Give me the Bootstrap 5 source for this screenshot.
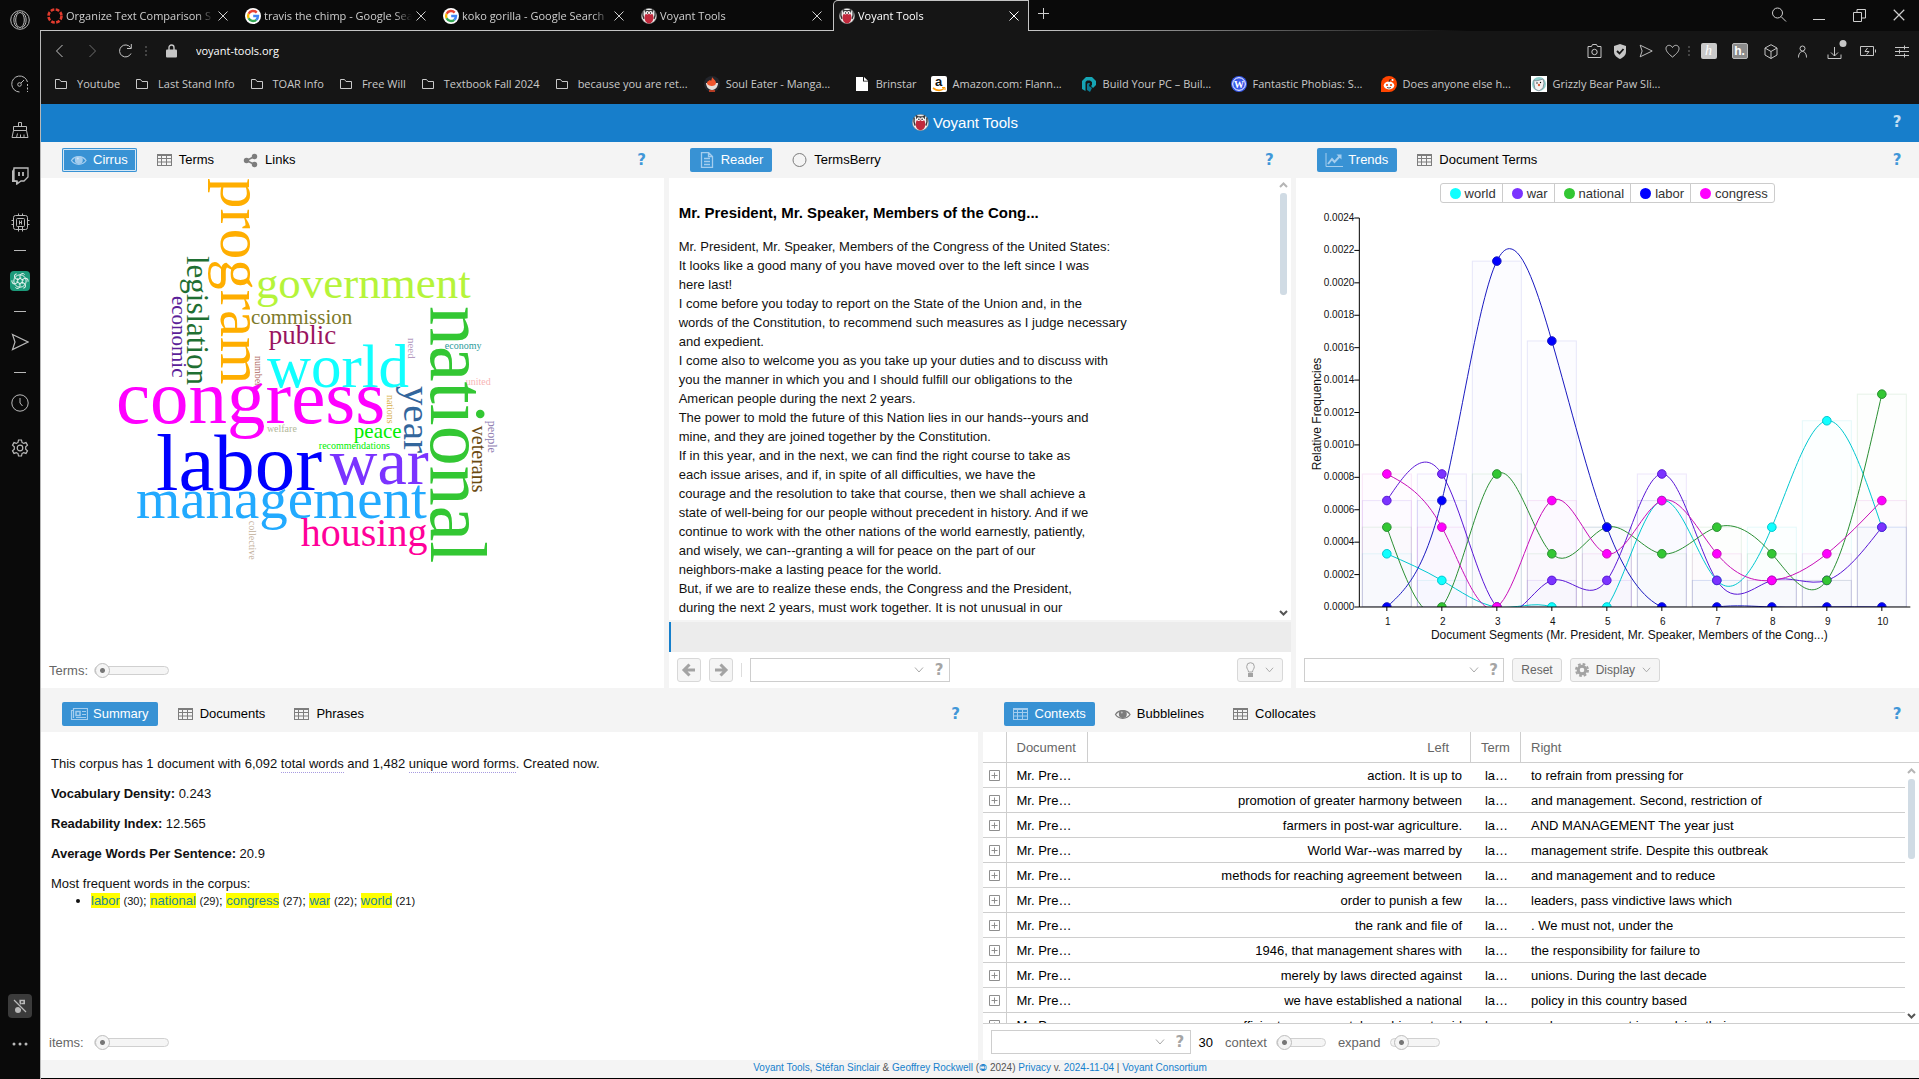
<!DOCTYPE html>
<html lang="en">
<head>
<meta charset="utf-8">
<meta name="viewport" content="width=device-width, initial-scale=1">
<title>Voyant Tools</title>
<link href="https://cdn.jsdelivr.net/npm/bootstrap@5.3.0/dist/css/bootstrap.min.css" rel="stylesheet">
<style>
  :root { --blue:#157fcc; --tab:#3892d4; --grey:#f4f4f4; --line:#cecece; --chrome:#151515; --dark:#0a0a0a; --edge:#b8b8b8; }
  body { font-family:"Liberation Sans",Arial,sans-serif; font-size:13px; line-height:19px; color:#000; background:var(--dark); overflow:hidden; }
  button, input { font-family:inherit; }
  svg { display:block; flex:none; }
  .ico { fill:none; stroke:currentColor; stroke-width:1; }
  .plain { background:none; border:0; padding:0; color:inherit; display:flex; align-items:center; justify-content:center; }

  /* browser side bar */
  .side { width:40px; flex:none; color:#b9b9b9; }
  .side .plain { height:46px; }
  .side .s40 { height:40px; } .side .s50 { height:50px; } .side .s38 { height:38px; }
  .side .first { margin-bottom:21px; }
  .side .dash { height:11px; display:flex; align-items:center; justify-content:center; }
  .side .dash::before { content:""; width:12px; height:1px; background:#b9b9b9; }
  .mute { width:24px; height:24px; border-radius:4px; background:#3b3b3b; display:flex; align-items:center; justify-content:center; }

  /* browser tabs and tool bars */
  .chrome-font { font-family:"Open Sans","Noto Sans",sans-serif; font-size:11px; line-height:16px; }
  .tabrow { height:31px; color:#cfcfcf; padding-left:1px; background:linear-gradient(90deg,#c4c4c4 0 53%,transparent 76%) bottom/100% 1px no-repeat; }
  .btab { width:198px; padding:0 10px 0 6px; gap:3px; color:inherit; text-decoration:none; }
  .btab.on { width:196px; padding:0 8px 0 5px; background:var(--chrome); border:1px solid #c4c4c4; border-bottom:0; border-radius:5px 0 0 0; color:#fff; }
  .btab .lbl { overflow:hidden; white-space:nowrap; -webkit-mask-image:linear-gradient(90deg,#000 88%,transparent); }
  .wbtn { width:40px; height:30px; }
  .framed { border-left:1px solid var(--edge); }
  .urlrow { height:41px; background:var(--chrome); color:#c6c6c6; padding:0 1px 1px 2px; }
  .urlrow .plain { height:32px; }
  .w33 { width:33px; } .w31 { width:31px; } .w26 { width:26px; }
  .dots { width:8px; color:#444; display:flex; justify-content:center; }
  .url { background:none; border:0; color:#fff; padding:0; outline:0; margin-left:19px; }
  .sq { width:16px; height:16px; border-radius:2px; background:#c9c9c9; color:#fff; font:italic 14px/16px "Liberation Serif",serif; text-align:center; }
  .sq.hyp { background:#8b8b8b; font:bold 12px/15px "Liberation Sans",sans-serif; border:1px solid #b9b9b9; }
  .marks { height:32px; padding:0 0 8px 12px; background:var(--chrome); color:#c9c9c9; }
  .marks a { color:inherit; text-decoration:none; display:flex; align-items:center; gap:6px; white-space:nowrap; padding-right:14px; }
  .marks .fold svg { margin-right:2px; }
  .marks .wide { width:150px; padding-right:0; }

  /* application */
  .brand { height:38px; background:#177ecb; color:#fff; font-size:15px; padding:0 14px 2px 0; }
  .help { color:#4197d8; font:bold 15px/19px "DejaVu Sans",sans-serif; width:16px; }
  .brand .help { color:#c4dff3; }
  .app { background:var(--grey); }
  .r-top { flex:546 1 0; } .r-bot { flex:372 1 0; }
  .cols { gap:5px; }
  .pane { flex:1 1 0; min-width:0; }
  .tabs { padding:6px 14px 6px 21px; gap:11px; }
  .r-bot .tabs { padding-top:14px; }
  .tb { height:24px; border:0; background:none; border-radius:2px; padding:0 9px 1px 8px; display:flex; align-items:center; gap:5px; color:#000; white-space:nowrap; }
  .tb svg { color:#7d7d7d; }
  .tb.active { background:var(--tab); color:#fff; }
  .tb.active svg { color:#a4cdee; }
  .tb.foc { box-shadow:inset 0 0 0 1px var(--tab), inset 0 0 0 2px #d3e7f6; }
  .tools { height:36px; padding:0 8px; gap:8px; color:#666; flex:none; }
  .tools label { color:#666; }
  .lab { width:37px; white-space:nowrap; }
  .combo { width:200px; height:24px; border:1px solid var(--line); background:#fff; color:#aaa; padding-right:3px; }
  .combo input { border:0; outline:0; width:100%; min-width:0; background:none; height:22px; }
  .combo .help { color:#a5a5a5; margin-left:8px; }
  .tbtn { height:24px; border:1px solid #d8d8d8; border-radius:3px; background:#f5f5f5; color:#666; font-size:12px; padding:0 8px; display:flex; align-items:center; justify-content:center; gap:7px; }
  .tbtn.disp { padding:0 8px 0 4px; }
  .tbtn.bulb { gap:10px; }
  .tbtn svg { color:#a3a3a3; }
  .sq24 { width:24px; padding:0; }
  .tsep { width:1px; height:14px; background:#ddd; }
  .rng { -webkit-appearance:none; appearance:none; height:15px; width:75px; background:none; margin:0; }
  .rng.short { width:50px; margin-left:1px; }
  .rng::-webkit-slider-runnable-track { height:9px; border:1px solid #d0d0d0; border-radius:5px; background:#f5f5f5; }
  .rng::-webkit-slider-thumb { -webkit-appearance:none; width:15px; height:15px; margin-top:-4px; border:1px solid #bdbdbd; border-radius:50%; background:radial-gradient(circle,#777 0 2px,#f5f5f5 3px); }

  .cloud text { font-family:"Liberation Serif",serif; }
  .chart text { font-family:"Liberation Sans",Arial,sans-serif; fill:#111; }

  .scroller { flex-basis:0; }
  .reader { padding:25px 10px 0; color:#111; position:relative; }
  .reader h2 { font-size:15px; line-height:20px; font-weight:bold; margin:0 0 14px; color:#000; }
  .reader p { margin:0; }
  .sbar { position:absolute; right:3px; top:3px; bottom:3px; width:9px; color:#b5b5b5; display:flex; flex-direction:column; align-items:center; }
  .sbar i { width:7px; border-radius:3px; background:#d0dbe4; margin:4px 0 auto; height:102px; }
  .sbar svg:last-child { color:#555; }
  .strip { height:32px; background:#ececec; border-top:2px solid var(--grey); flex:none; }
  .strip::before { content:""; display:block; width:2px; height:30px; background:var(--blue); }

  .legend { padding-top:5px; }
  .lg { height:20px; border:1px solid #ccc; margin-left:-1px; background:#fff; padding:0 6px 0 9px; display:flex; align-items:center; gap:4px; color:#333; }
  .lg:first-child { border-radius:3px 0 0 3px; } .lg:last-child { border-radius:0 3px 3px 0; }
  .lg i { width:11px; height:11px; border-radius:50%; }

  .sum { padding:22px 10px 0; color:#111; }
  .sum p { margin:0 0 11px; }
  .sum .defn { border-bottom:1px dotted #a79be0; display:inline-block; line-height:16px; }
  .sum ul { margin:-13px 0 0; padding-left:40px; }
  .sum .cnt { font-size:11px; }
  .sum a { background:#ff0; color:#23869c; text-decoration:none; }

  .gridbox { border-bottom:1px solid var(--line); position:relative; }
  .kwic { width:100%; table-layout:fixed; border-collapse:separate; border-spacing:0; }
  .kwic th { height:31px; border-bottom:1px solid var(--line); font-weight:normal; color:#666; padding:0 10px; border-right:1px solid var(--line); vertical-align:middle; }
  .kwic th.nb { border-right:0; }
  .kwic th.lefth { padding-right:21px; }
  .kwic td { height:25px; border-bottom:1px solid var(--line); padding:0 9px 0 10px; white-space:nowrap; overflow:hidden; }
  .kwic td:first-child { border-right:1px solid var(--line); padding:0; }
  .kwic td:first-child svg { margin:0 auto; }
  .kwic td:last-child { border-bottom:0; }
  .gridbox .sbar { top:35px; }
  .gridbox .sbar i { height:80px; }
  .foot { height:18px; font-size:10px; line-height:16px; color:#555; background:var(--grey); flex:none; border-bottom:1px solid #000; box-sizing:content-box; }
  .foot a { color:#157fcc; text-decoration:none; }
</style>
</head>
<body class="vh-100 d-flex">

<svg width="0" height="0" class="position-absolute" aria-hidden="true">
  <symbol id="owl" viewBox="0 0 16 16"><ellipse cx="8" cy="8" rx="7.600" ry="7.600" fill="#f2f2f2" stroke="#8a8a8a" stroke-width=".6"/><path d="M2 3.500Q1.300 8 3 11M14 3.500Q14.700 8 13 11" stroke="#333" stroke-width="1.300" fill="none"/><path d="M3.500.800l2.500 1.200h4l2.500-1.200l-.5 4H4z" fill="#3a3a3a"/><ellipse cx="8" cy="9.600" rx="4.500" ry="5.800" fill="#c0293c"/><circle cx="6.300" cy="4.800" r="1.800" fill="#fff"/><circle cx="9.700" cy="4.800" r="1.800" fill="#fff"/><circle cx="6.500" cy="5" r=".7"/><circle cx="9.500" cy="5" r=".7"/></symbol>
  <symbol id="goog" viewBox="0 0 16 16"><circle cx="8" cy="8" r="8" fill="#fff"/><g fill="none" stroke-width="2.400"><path d="M11.700 4.600A5 5 0 0 0 3.600 5.700" stroke="#ea4335"/><path d="M3.600 5.700a5 5 0 0 0 0 4.600" stroke="#fbbc05"/><path d="M3.600 10.300a5 5 0 0 0 7.700 1.500" stroke="#34a853"/><path d="M11.300 11.800A5 5 0 0 0 13 8H8.200" stroke="#4285f4"/></g></symbol>
  <symbol id="xx" viewBox="0 0 12 12"><path d="M1.500 1.500l9 9M10.500 1.500l-9 9" stroke="currentColor"/></symbol>
  <symbol id="folder" viewBox="0 0 16 14"><path d="M2.500 2.500h4l1.500 2h5.500v7h-11z" fill="none" stroke="currentColor"/></symbol>
  <symbol id="table" viewBox="0 0 18 16"><g fill="none" stroke="currentColor"><rect x="1.500" y="2.500" width="14" height="11"/><path d="M1 3.500h15M1 6.500h15M1 10h15M5.500 3v11M10.500 3v11"/></g></symbol>
  <symbol id="eye" viewBox="0 0 18 16"><path d="M1.500 8.500C4.500 3.500 13 3.500 16 8.500C13 13.500 4.500 13.500 1.500 8.500z" fill="none" stroke="currentColor" stroke-width="1.300"/><circle cx="8.800" cy="8" r="4" fill="currentColor"/><circle cx="7.800" cy="6.600" r="1" fill="#fff" opacity=".5"/></symbol>
  <symbol id="share" viewBox="0 0 18 16"><g fill="currentColor"><circle cx="4.500" cy="8.500" r="2.700"/><circle cx="12.500" cy="4.500" r="2.700"/><circle cx="12.500" cy="12.500" r="2.700"/></g><path d="M12.500 4.500l-8 4l8 4" stroke="currentColor" stroke-width="1.600" fill="none"/></symbol>
  <symbol id="down" viewBox="0 0 10 8"><path d="M1 1.500l4 4.500l4-4.500" fill="none" stroke="currentColor"/></symbol>
  <symbol id="arr" viewBox="0 0 16 16"><path d="M8.500 2.500L3 8l5.500 5.500M3 8h11" fill="none" stroke="currentColor" stroke-width="3"/></symbol>
  <symbol id="send" viewBox="0 0 18 18"><path d="M1.500 1.500L17 9L1.500 16.500L4 9z" fill="none" stroke="currentColor" stroke-width="1.200"/></symbol>
  <symbol id="gear" viewBox="0 0 18 18"><path d="M7.500 1h3l.5 2.400 1.700 1 2.300-.8 1.500 2.600-1.800 1.600v2.400l1.800 1.600-1.500 2.600-2.300-.8-1.700 1-.5 2.400h-3L7 14.600l-1.700-1-2.300.8-1.500-2.600 1.800-1.600V7.800L1.500 6.200 3 3.600l2.300.8 1.700-1z" fill="none" stroke="currentColor" stroke-width="1.200"/><circle cx="9" cy="9" r="2.800" fill="none" stroke="currentColor" stroke-width="1.200"/></symbol>
  <symbol id="plus" viewBox="0 0 11 11"><path d="M.5.500h10v10H.5zM2.500 5.500h6M5.500 2.500v6" fill="none" stroke="#8e8e8e"/></symbol>
  <symbol id="caretU" viewBox="0 0 9 6"><path d="M1 5l3.500-3.500L8 5" fill="none" stroke="currentColor" stroke-width="2"/></symbol>
  <symbol id="caretD" viewBox="0 0 9 6"><path d="M1 1l3.500 3.500L8 1" fill="none" stroke="currentColor" stroke-width="2"/></symbol>
</svg>

<aside class="side d-flex flex-column">
  <button class="plain s40 first" aria-label="Opera"><svg class="ico" width="20" height="20" viewBox="0 0 20 20"><circle cx="10" cy="10" r="9.300"/><ellipse cx="10" cy="10" rx="4.300" ry="7.500"/><path d="M8 2.500C2.500 4 2.500 16 8 17.500M12 2.500c5.500 1.500 5.500 13.500 0 15"/></svg></button>
  <button class="plain" aria-label="Speed dial"><svg class="ico" width="18" height="18" viewBox="0 0 18 18" stroke-width="1.200"><path d="M8.500 17A8 8 0 1 1 16.500 7"/><path d="M16.500 9v8" stroke-dasharray="2 1.500"/><circle cx="8.500" cy="9.500" r="1.800"/><path d="M10 8l3-3"/></svg></button>
  <button class="plain" aria-label="Cleaner"><svg class="ico" width="18" height="18" viewBox="0 0 18 18"><path d="M7.500 5.500v-4h3v4M2.500 9.500v-4h13v4zM2.500 9.500L1 16.500h16l-1.500-7M5.500 16.500l1-4M9.500 16.500v-3M13 16.500v-3"/></svg></button>
  <button class="plain" aria-label="Twitch"><svg width="18" height="18" viewBox="0 0 18 18"><path d="M3 1h14v9l-4 4h-3l-4 3v-3H3z" fill="none" stroke="currentColor" stroke-width="1.300"/><path d="M3 1L1 4v11h4v3l3-3-5-2z" fill="currentColor"/><path d="M8 5v4M12 5v4" stroke="currentColor" stroke-width="1.800"/></svg></button>
  <button class="plain" aria-label="Chip"><svg class="ico" width="19" height="19" viewBox="0 0 19 19"><rect x="2.500" y="2.500" width="14" height="14" rx="2"/><rect x="5.500" y="5.500" width="8" height="8" rx="1"/><path d="M7.500 2.500v-2M11.500 2.500v-2M7.500 18.500v-5M11.500 18.500v-5M.5 7.500h2M.5 11.500h2M16.500 7.500h2M16.500 11.500h2"/><path d="M8.500 7.500v4M10.500 7.500v4M8 9.500h3"/></svg></button>
  <div class="dash"></div>
  <button class="plain s50" aria-label="ChatGPT"><svg width="20" height="20" viewBox="0 0 20 20"><rect width="20" height="20" rx="4" fill="#1c9a7a"/><g fill="none" stroke="#e8f5f1" stroke-width="1"><path id="kn" d="M10 7.400V4.800a2.600 2.600 0 0 1 4.600-1.300M10 7.400l3.500 2"/><use href="#kn" transform="rotate(60 10 10)"/><use href="#kn" transform="rotate(120 10 10)"/><use href="#kn" transform="rotate(180 10 10)"/><use href="#kn" transform="rotate(240 10 10)"/><use href="#kn" transform="rotate(300 10 10)"/><circle cx="10" cy="10" r="6.200"/></g></svg></button>
  <div class="dash"></div>
  <button class="plain s50" aria-label="My flow"><svg width="18" height="18"><use href="#send"/></svg></button>
  <div class="dash"></div>
  <button class="plain s50" aria-label="History"><svg class="ico" width="18" height="18" viewBox="0 0 18 18" stroke-width="1.200"><circle cx="9" cy="9" r="8.200"/><path d="M9 4v5l2.500 3"/></svg></button>
  <button class="plain s40" aria-label="Settings"><svg width="18" height="18"><use href="#gear"/></svg></button>
  <button class="plain s38 mt-auto" aria-label="Player muted"><span class="mute"><svg width="14" height="14" viewBox="0 0 14 14"><circle cx="5" cy="11" r="3" fill="currentColor"/><path d="M7.200 11V1.500h4v3h-3" stroke="currentColor" stroke-width="1.600" fill="none"/><path d="M1 1l12 12" stroke="#3b3b3b" stroke-width="3"/><path d="M1 1l12 12" stroke="currentColor" stroke-width="1.200"/></svg></span></button>
  <button class="plain s38 mb-3" aria-label="More"><svg width="16" height="4" viewBox="0 0 16 4" fill="currentColor"><circle cx="2" cy="2" r="1.500"/><circle cx="8" cy="2" r="1.500"/><circle cx="14" cy="2" r="1.500"/></svg></button>
</aside>

<main class="flex-grow-1 d-flex flex-column overflow-hidden">
  <nav class="tabrow d-flex chrome-font flex-shrink-0">
    <a href="#" class="btab d-flex align-items-center"><svg width="16" height="16" viewBox="0 0 16 16"><circle cx="8" cy="8" r="6.500" fill="none" stroke="#e23b2e" stroke-width="2.600" stroke-dasharray="3.600 1.500"/></svg><span class="lbl flex-grow-1">Organize Text Comparison S</span><svg width="12" height="12"><use href="#xx"/></svg></a>
    <a href="#" class="btab d-flex align-items-center"><svg width="16" height="16"><use href="#goog"/></svg><span class="lbl flex-grow-1">travis the chimp - Google Search</span><svg width="12" height="12"><use href="#xx"/></svg></a>
    <a href="#" class="btab d-flex align-items-center"><svg width="16" height="16"><use href="#goog"/></svg><span class="lbl flex-grow-1">koko gorilla - Google Search</span><svg width="12" height="12"><use href="#xx"/></svg></a>
    <a href="#" class="btab d-flex align-items-center"><svg width="16" height="16"><use href="#owl"/></svg><span class="lbl flex-grow-1">Voyant Tools</span><svg width="12" height="12"><use href="#xx"/></svg></a>
    <a href="#" class="btab on d-flex align-items-center"><svg width="16" height="16"><use href="#owl"/></svg><span class="lbl flex-grow-1">Voyant Tools</span><svg width="12" height="12"><use href="#xx"/></svg></a>
    <button class="plain ms-2 mb-1" aria-label="New tab"><svg class="ico" width="13" height="13" viewBox="0 0 13 13"><path d="M6.500 1v11M1 6.500h11"/></svg></button>
    <div class="ms-auto d-flex">
      <button class="plain wbtn" aria-label="Search"><svg class="ico" width="16" height="16" viewBox="0 0 16 16" stroke-width="1.200"><circle cx="6.500" cy="6" r="5"/><path d="M10 9.500l5 5"/></svg></button>
      <button class="plain wbtn" aria-label="Minimize"><svg class="ico" width="12" height="12" viewBox="0 0 12 12"><path d="M0 10.500h12"/></svg></button>
      <button class="plain wbtn" aria-label="Restore"><svg class="ico" width="13" height="13" viewBox="0 0 13 13"><path d="M.5 3.500h8v9h-8zM4 3.500v-3h8.500v8.500H9"/></svg></button>
      <button class="plain wbtn" aria-label="Close"><svg width="14" height="14"><use href="#xx"/></svg></button>
    </div>
  </nav>

  <div class="framed flex-grow-1 d-flex flex-column overflow-hidden">
    <div class="urlrow chrome-font d-flex align-items-center flex-shrink-0">
      <button class="plain w33" aria-label="Back"><svg class="ico" width="9" height="14" viewBox="0 0 9 14" stroke-width="1.400"><path d="M7.500 1L1.500 7l6 6"/></svg></button>
      <button class="plain w33 opacity-50" aria-label="Forward"><svg class="ico" width="9" height="14" viewBox="0 0 9 14"><path d="M1.500 1l6 6l-6 6"/></svg></button>
      <button class="plain w33" aria-label="Reload"><svg class="ico" width="15" height="14" viewBox="0 0 15 14" stroke-width="1.400"><path d="M12.500 3.500A6 6 0 1 0 13 9.500M13.300 0v4.500H9"/></svg></button>
      <span class="dots"><svg width="2" height="12" fill="currentColor"><path d="M0 1h2v2H0zM0 5h2v2H0zM0 9h2v2H0z"/></svg></span>
      <span class="ps-3"><svg width="11" height="14" viewBox="0 0 11 14"><rect y="5.500" width="11" height="8" rx="1" fill="currentColor"/><path d="M3 6V3.500a2.500 2.500 0 0 1 5 0V6" fill="none" stroke="currentColor" stroke-width="1.400"/></svg></span>
      <input class="url flex-grow-1" type="text" value="voyant-tools.org" aria-label="Address">
      <button class="plain w26" aria-label="Snapshot"><svg class="ico" width="15" height="14" viewBox="0 0 15 14"><path d="M1 2.500h3.500l1-2h4l1 2H14v11H1z"/><circle cx="7.500" cy="8" r="2.700"/></svg></button>
      <button class="plain w26" aria-label="Ad blocker"><svg width="14" height="15" viewBox="0 0 14 15"><path d="M7 0l6 2v5.500c0 4-3 6-6 7.500-3-1.500-6-3.500-6-7.500V2z" fill="currentColor"/><path d="M4 7l2.500 2.500L10.500 5" stroke="#151515" stroke-width="1.800" fill="none"/></svg></button>
      <button class="plain w26" aria-label="Send to flow"><svg width="14" height="14"><use href="#send"/></svg></button>
      <button class="plain w26" aria-label="Bookmark"><svg class="ico" width="15" height="14" viewBox="0 0 15 14" stroke-width="1.200"><path d="M7.500 13C3 9.500 1 7 1 4.500 1 1 5.500 0 7.500 3.500 9.500 0 14 1 14 4.500c0 2.500-2 5-6.500 8.500z"/></svg></button>
      <span class="dots"><svg width="2" height="12" fill="currentColor"><path d="M0 1h2v2H0zM0 5h2v2H0zM0 9h2v2H0z"/></svg></span>
      <button class="plain w31" aria-label="Honey"><span class="sq">h</span></button>
      <button class="plain w31" aria-label="Hypothesis"><span class="sq hyp">h.</span></button>
      <button class="plain w31" aria-label="Extensions"><svg class="ico" width="14" height="15" viewBox="0 0 14 15"><path d="M7 .7l6 3.300v7l-6 3.500-6-3.500V4zM1 4l6 3.500L13 4M7 7.500v7"/></svg></button>
      <button class="plain w33" aria-label="Account"><svg class="ico" width="11" height="13" viewBox="0 0 11 13"><circle cx="5.500" cy="3.500" r="2.500"/><path d="M1.500 12.500c0-8 8-8 8 0"/></svg></button>
      <button class="plain w33 position-relative" aria-label="Downloads"><svg class="ico" width="22" height="22" viewBox="0 0 22 22"><path d="M9.500 7v9M6 12.500l3.500 3.500l3.500-3.500M3 14.500v4h13v-4"/><circle cx="18" cy="3.500" r="3.500" fill="currentColor" stroke="none"/></svg></button>
      <button class="plain w33" aria-label="Battery saver"><svg class="ico" width="17" height="10" viewBox="0 0 17 10"><path d="M.5.500h13v9H.5zM15.500 3.500v3M7.500 2L5 5.500h4L6.500 8.500"/></svg></button>
      <button class="plain w33" aria-label="Easy setup"><svg class="ico" width="14" height="13" viewBox="0 0 14 13"><path d="M0 2.500h14M0 6.500h14M0 10.500h14M9.500 .5v4M4.500 4.500v4M9.500 8.500v4"/></svg></button>
    </div>
    <nav class="marks chrome-font d-flex align-items-center flex-shrink-0">
      <a href="#" class="fold"><svg width="16" height="14"><use href="#folder"/></svg>Youtube</a>
      <a href="#" class="fold"><svg width="16" height="14"><use href="#folder"/></svg>Last Stand Info</a>
      <a href="#" class="fold"><svg width="16" height="14"><use href="#folder"/></svg>TOAR Info</a>
      <a href="#" class="fold"><svg width="16" height="14"><use href="#folder"/></svg>Free Will</a>
      <a href="#" class="fold"><svg width="16" height="14"><use href="#folder"/></svg>Textbook Fall 2024</a>
      <a href="#" class="fold wide"><svg width="16" height="14"><use href="#folder"/></svg>because you are ret...</a>
      <a href="#" class="wide"><svg width="16" height="16" viewBox="0 0 16 16"><circle cx="8" cy="8" r="8" fill="#23252b"/><path d="M2 7h12c0 3-2 7-6 7S2 10 2 7z" fill="#e6ddd8"/><path d="M8 1c1 2 4 3 4 6 0 2-2 3-4 3S3 9 3 7c0-2 2-2 3-3 .5 0 1 1 1 1s1-2 1-4z" fill="#f0552d"/><path d="M5 14h6v2H5z" fill="#b33c24"/></svg>Soul Eater - Manga...</a>
      <a href="#"><svg width="16" height="16" viewBox="0 0 16 16"><path d="M2 1h7v4.500h5V15H2z" fill="#fff"/><path d="M10 1l4 3.700h-4z" fill="#fff"/></svg>Brinstar</a>
      <a href="#" class="wide"><svg width="16" height="16" viewBox="0 0 16 16"><rect width="16" height="16" rx="2" fill="#fff"/><text x="4" y="10" font-family="Liberation Sans" font-weight="bold" font-size="13" fill="#111">a</text><path d="M2 12c4 3 8 3 11 .5" stroke="#f90" stroke-width="1.600" fill="none"/><path d="M11 11.500h3v2.500" stroke="#f90" fill="none"/></svg>Amazon.com: Flann...</a>
      <a href="#" class="wide"><svg width="16" height="16" viewBox="0 0 16 16"><path d="M1 5l4-4h6l4 4v4l-3 3-2-2 1-1V6L9 4.500H6L4.500 6v9L1 13z" fill="#16a5b5"/><path d="M7 7h2l-1 3 3 2-2 4-3-2V8z" fill="#0b7a91"/></svg>Build Your PC – Buil...</a>
      <a href="#" class="wide"><svg width="16" height="16" viewBox="0 0 16 16"><circle cx="8" cy="8" r="8" fill="#3858e9"/><circle cx="8" cy="8" r="6.300" fill="none" stroke="#fff"/><text x="3" y="12" font-family="Liberation Serif" font-weight="bold" font-size="10" fill="#fff">W</text></svg>Fantastic Phobias: S...</a>
      <a href="#" class="wide"><svg width="16" height="16" viewBox="0 0 16 16"><path d="M0 16V8a8 8 0 1 1 8 8z" fill="#ff4500"/><ellipse cx="8" cy="9.500" rx="5.300" ry="3.900" fill="#fff"/><circle cx="6" cy="9" r="1.100" fill="#ff4500"/><circle cx="10" cy="9" r="1.100" fill="#ff4500"/><path d="M6 11.300c1 .9 3 .9 4 0M8 6l.8-2.500 2.200.5" stroke="#222" fill="none" stroke-width=".8"/><circle cx="11.500" cy="4" r="1.100" fill="#fff"/></svg>Does anyone else h...</a>
      <a href="#" class="wide"><svg width="16" height="16" viewBox="0 0 16 16"><rect width="16" height="16" fill="#fff"/><circle cx="8" cy="8" r="7" fill="#8fd0cd"/><path d="M3 4l2 1 4-1 3-1 1 4-1 5-4 3-4-2-1-5z" fill="#f3f3f3" stroke="#667"  stroke-width=".6"/><circle cx="6" cy="7" r=".7"/><circle cx="9.500" cy="6.500" r=".7"/><circle cx="8" cy="9" r="1.200" fill="#e0603c"/></svg>Grizzly Bear Paw Sli...</a>
    </nav>

    <header class="brand d-flex align-items-center flex-shrink-0">
      <div class="flex-grow-1 d-flex align-items-center justify-content-center">
        <svg width="17" height="17" class="me-1"><use href="#owl"/></svg><span>Voyant Tools</span>
      </div>
      <button class="plain help" aria-label="Help">?</button>
    </header>

    <div class="app flex-grow-1 d-flex flex-column overflow-hidden">
      <div class="r-top d-flex cols overflow-hidden">

        <section class="pane d-flex flex-column">
          <div class="tabs d-flex align-items-center">
            <button class="tb active foc"><svg width="18" height="16"><use href="#eye"/></svg>Cirrus</button>
            <button class="tb"><svg width="18" height="16"><use href="#table"/></svg>Terms</button>
            <button class="tb"><svg width="18" height="16"><use href="#share"/></svg>Links</button>
            <button class="plain help ms-auto" aria-label="Help">?</button>
          </div>
          <div class="bg-white flex-grow-1 overflow-hidden">
            <svg class="cloud w-100 h-100" viewBox="41 178 623 470" preserveAspectRatio="xMidYMin meet" id="cloud"></svg>
          </div>
          <div class="tools bg-white d-flex align-items-center"><label for="terms" class="lab">Terms:</label><input id="terms" class="rng" type="range" value="0"></div>
        </section>

        <section class="pane d-flex flex-column">
          <div class="tabs d-flex align-items-center">
            <button class="tb active"><svg class="ico" width="18" height="16" viewBox="0 0 18 16"><path d="M3.500.500h7l4 4v11h-11zM10.500.500v4h4M6 6.500h6M6 9.500h6M6 12.500h6" stroke-width="1.300"/></svg>Reader</button>
            <button class="tb"><svg class="ico" width="18" height="16" viewBox="0 0 18 16"><circle cx="8.500" cy="8" r="6.500"/></svg>TermsBerry</button>
            <button class="plain help ms-auto" aria-label="Help">?</button>
          </div>
          <div class="reader scroller bg-white flex-grow-1 overflow-hidden">
            <h2>Mr. President, Mr. Speaker, Members of the Cong...</h2>
            <p>Mr. President, Mr. Speaker, Members of the Congress of the United States:</p>
            <p>It looks like a good many of you have moved over to the left since I was<br>here last!</p>
            <p>I come before you today to report on the State of the Union and, in the<br>words of the Constitution, to recommend such measures as I judge necessary<br>and expedient.</p>
            <p>I come also to welcome you as you take up your duties and to discuss with<br>you the manner in which you and I should fulfill our obligations to the<br>American people during the next 2 years.</p>
            <p>The power to mold the future of this Nation lies in our hands--yours and<br>mine, and they are joined together by the Constitution.</p>
            <p>If in this year, and in the next, we can find the right course to take as<br>each issue arises, and if, in spite of all difficulties, we have the<br>courage and the resolution to take that course, then we shall achieve a<br>state of well-being for our people without precedent in history. And if we<br>continue to work with the other nations of the world earnestly, patiently,<br>and wisely, we can--granting a will for peace on the part of our<br>neighbors-make a lasting peace for the world.</p>
            <p>But, if we are to realize these ends, the Congress and the President,<br>during the next 2 years, must work together. It is not unusual in our</p>
            <div class="sbar"><svg width="9" height="8"><use href="#caretU"/></svg><i></i><svg width="9" height="8"><use href="#caretD"/></svg></div>
          </div>
          <div class="strip"></div>
          <div class="tools bg-white d-flex align-items-center">
            <button class="tbtn sq24" aria-label="Previous"><svg width="16" height="16"><use href="#arr"/></svg></button>
            <button class="tbtn sq24" aria-label="Next"><svg width="16" height="16"><use href="#arr" transform="rotate(180 8 8)"/></svg></button>
            <span class="tsep"></span>
            <div class="combo d-flex align-items-center"><input type="text" aria-label="Search terms"><svg width="10" height="8"><use href="#down"/></svg><button class="plain help" aria-label="Search help">?</button></div>
            <button class="tbtn bulb ms-auto" aria-label="Highlight"><svg class="ico" width="9" height="16" viewBox="0 0 9 16"><path d="M2.500 10C2.500 8 .7 7 .7 4.500a3.800 3.800 0 0 1 7.600 0C8.300 7 6.500 8 6.500 10z"/><path d="M2 11h5v4H2z" fill="currentColor" stroke="none"/></svg><svg width="9" height="8"><use href="#down"/></svg></button>
          </div>
        </section>

        <section class="pane d-flex flex-column">
          <div class="tabs d-flex align-items-center">
            <button class="tb active"><svg class="ico" width="18" height="16" viewBox="0 0 18 16"><path d="M1 1v13.500h17"/><path d="M3 12l4-5 2.500 3L15 4" stroke-width="2"/><path d="M11.500 2.500h5v5z" fill="currentColor" stroke="none"/></svg>Trends</button>
            <button class="tb"><svg width="18" height="16"><use href="#table"/></svg>Document Terms</button>
            <button class="plain help ms-auto" aria-label="Help">?</button>
          </div>
          <div class="legend bg-white d-flex justify-content-center" id="legend"></div>
          <div class="bg-white flex-grow-1 overflow-hidden">
            <svg class="chart w-100 h-100" viewBox="-1 0 622 449" preserveAspectRatio="xMidYMin meet" id="chart"></svg>
          </div>
          <div class="tools bg-white d-flex align-items-center">
            <div class="combo d-flex align-items-center"><input type="text" aria-label="Trend terms"><svg width="10" height="8"><use href="#down"/></svg><button class="plain help" aria-label="Search help">?</button></div>
            <button class="tbtn">Reset</button>
            <button class="tbtn disp"><svg class="ico" width="14" height="14" viewBox="0 0 14 14"><circle cx="7" cy="7" r="3.800" stroke-width="3"/><circle cx="7" cy="7" r="6" stroke-width="2" stroke-dasharray="2.700 2"/></svg>Display<svg width="9" height="8"><use href="#down"/></svg></button>
          </div>
        </section>
      </div>

      <div class="r-bot d-flex cols overflow-hidden">
        <section class="pane d-flex flex-column">
          <div class="tabs d-flex align-items-center">
            <button class="tb active"><svg class="ico" width="18" height="16" viewBox="0 0 18 16"><path d="M3.500 2.500h14v11h-16v-9h2zM3.500 4v8" stroke-width="1.200"/><rect x="6" y="5.500" width="4" height="4" stroke-width="1.500"/><path d="M12 5.500h4M12 8.500h4M6 11.500h10"/></svg>Summary</button>
            <button class="tb"><svg width="18" height="16"><use href="#table"/></svg>Documents</button>
            <button class="tb"><svg width="18" height="16"><use href="#table"/></svg>Phrases</button>
            <button class="plain help ms-auto" aria-label="Help">?</button>
          </div>
          <div class="sum bg-white flex-grow-1 overflow-hidden">
            <p>This corpus has 1 document with 6,092 <span class="defn">total words</span> and 1,482 <span class="defn">unique word forms</span>. Created now.</p>
            <p><b>Vocabulary Density:</b> 0.243</p>
            <p><b>Readability Index:</b> 12.565</p>
            <p><b>Average Words Per Sentence:</b> 20.9</p>
            <p>Most frequent words in the corpus:</p>
            <ul><li><a href="#">labor</a> <span class="cnt">(30)</span>; <a href="#">national</a> <span class="cnt">(29)</span>; <a href="#">congress</a> <span class="cnt">(27)</span>; <a href="#">war</a> <span class="cnt">(22)</span>; <a href="#">world</a> <span class="cnt">(21)</span></li></ul>
          </div>
          <div class="tools bg-white d-flex align-items-center"><label for="items" class="lab">items:</label><input id="items" class="rng" type="range" value="0"></div>
        </section>

        <section class="pane d-flex flex-column">
          <div class="tabs d-flex align-items-center">
            <button class="tb active"><svg width="18" height="16"><use href="#table"/></svg>Contexts</button>
            <button class="tb"><svg width="18" height="16"><use href="#eye"/></svg>Bubblelines</button>
            <button class="tb"><svg width="18" height="16"><use href="#table"/></svg>Collocates</button>
            <button class="plain help ms-auto" aria-label="Help">?</button>
          </div>
          <div class="gridbox scroller bg-white flex-grow-1 overflow-hidden">
            <table class="kwic">
              <colgroup><col style="width:24px"><col style="width:81px"><col><col style="width:50px"><col style="width:384px"><col style="width:14px"></colgroup>
              <thead><tr><th></th><th>Document</th><th class="text-end lefth">Left</th><th>Term</th><th class="nb">Right</th><th class="nb"></th></tr></thead>
              <tbody id="rows"></tbody>
            </table>
            <div class="sbar"><svg width="9" height="8"><use href="#caretU"/></svg><i></i><svg width="9" height="8"><use href="#caretD"/></svg></div>
          </div>
          <div class="tools bg-white d-flex align-items-center">
            <div class="combo d-flex align-items-center"><input type="text" aria-label="Context terms"><svg width="10" height="8"><use href="#down"/></svg><button class="plain help" aria-label="Search help">?</button></div>
            <span class="text-black">30</span>
            <label for="ctx" class="ms-1">context</label><input id="ctx" class="rng short" type="range" value="0">
            <label for="exp" class="ms-1">expand</label><input id="exp" class="rng short" type="range" value="10">
          </div>
        </section>
      </div>

      <footer class="foot text-center"><a href="#">Voyant Tools</a>, <a href="#">Stéfan Sinclair</a> &amp; <a href="#">Geoffrey Rockwell</a> (<a href="#">🄯</a> 2024) <a href="#">Privacy</a> v. <a href="#">2024-11-04</a> | <a href="#">Voyant Consortium</a></footer>
    </div>
  </div>
</main>

<script src="https://cdn.jsdelivr.net/npm/bootstrap@5.3.0/dist/js/bootstrap.bundle.min.js"></script>
<script>
// word, x, baseline y, size, colour, rotated
const words = [
  ['congress',116,423,77,'#f0f'],['labor',156,490,81,'#00f'],['war',330,484,66,'#7b33ff'],
  ['management',136,518,57,'#22aaff'],['housing',301,546,40,'#ff0099'],['government',256,298,45,'#b5f43a'],
  ['commission',251,324,21,'#7d7a2a'],['public',269,344,27,'#99145f'],['world',267,387,61,'#1ff'],
  ['peace',354,438,21,'#0e0'],['recommendations',319,449,10,'#0e0'],['welfare',267,432,10,'#b3b89a'],
  ['economy',445,349,10,'#2a9a9a'],['united',466,385,10,'#f7b5b5'],
  ['national',431,306,80,'#33c733',1],['program',221,178,61,'#ffae00',1],['legislation',187,256,31,'#1f6f33',1],
  ['economic',172,296,21,'#5b1f99',1],['number',255,356,10,'#b06a5f',1],['need',408,338,11,'#b49ac0',1],
  ['year',404,386,39,'#33669c',1],['nations',387,395,10,'#d8b04a',1],['veterans',472,426,20,'#6b4a10',1],
  ['people',488,421,12,'#8c7ab0',1],['collective',249,521,10,'#bfae98',1]
];
document.getElementById('cloud').innerHTML = words.map(([w,x,y,s,c,r]) =>
  `<text font-size="${s}" fill="${c}" ${r ? `transform="translate(${x} ${y}) rotate(90)"` : `x="${x}" y="${y}"`}>${w}</text>`).join('');

// term counts in each of the ten segments of the speech
const total = 6092;
const series = [
  ['world','#1ff','#00c8d0',[2,1,0,0,0,4,1,3,7,3]],
  ['war','#7b33ff','#5a17d6',[4,5,0,1,1,5,1,1,1,3]],
  ['national','#33c733','#2a8f33',[3,0,5,2,3,2,3,2,1,8]],
  ['labor','#00f','#1a1ac0',[0,4,13,10,3,0,0,0,0,0]],
  ['congress','#f0f','#c80fb8',[5,3,0,4,2,4,2,1,2,4]]
];
document.getElementById('legend').innerHTML = series.map(s =>
  `<button class="lg"><i style="background:${s[1]}"></i>${s[0]}</button>`).join('');

// slopes of the natural cubic spline through evenly spaced points
function slopes(v) {
  const n = v.length, b = [], d = [], m = [];
  for (let i = 0; i < n; i++) {
    b[i] = (i === 0 || i === n - 1) ? 2 : 4;
    d[i] = 3 * (v[Math.min(i + 1, n - 1)] - v[Math.max(i - 1, 0)]);
  }
  for (let i = 1; i < n; i++) { const f = 1 / b[i-1]; b[i] -= f; d[i] -= f * d[i-1]; }
  m[n-1] = d[n-1] / b[n-1];
  for (let i = n - 2; i >= 0; i--) m[i] = (d[i] - m[i+1]) / b[i];
  return m;
}
const X0 = 62, Y0 = 404, TOP = 15, STEP = 55, PX = (Y0 - TOP) / 0.0024;
const cx = i => X0 + STEP * (i + 0.5), cy = c => Y0 - c / total * PX;
let bars = '', lines = '', dots = '', axis = '';
series.forEach(([name, fill, stroke, v]) => {
  const m = slopes(v);
  let p = `M${cx(0)} ${cy(v[0])}`;
  for (let i = 0; i < 9; i++)
    p += `C${cx(i) + STEP/3} ${cy(v[i] + m[i]/3)} ${cx(i+1) - STEP/3} ${cy(v[i+1] - m[i+1]/3)} ${cx(i+1)} ${cy(v[i+1])}`;
  lines += `<path d="${p}" fill="none" stroke="${stroke}"/>`;
  v.forEach((c, i) => {
    if (c) bars += `<rect x="${cx(i) - 24.5}" y="${cy(c)}" width="49" height="${Y0 - cy(c)}" fill="${fill}" fill-opacity=".012" stroke="${stroke}" stroke-opacity=".1"/>`;
    dots += `<circle cx="${cx(i)}" cy="${cy(c)}" r="4.300" fill="${fill}" stroke="${stroke}"/>`;
  });
});
for (let k = 0; k <= 12; k++) {
  const y = Y0 - k * (Y0 - TOP) / 12;
  axis += `<path d="M${X0 - 5} ${y}h5" stroke="#000"/><text x="${X0 - 5}" y="${y + 3}" font-size="10" text-anchor="end">${(k * 0.0002).toFixed(4)}</text>`;
}
for (let i = 0; i < 10; i++)
  axis += `<path d="M${cx(i)} ${Y0}v4" stroke="#000"/><text x="${cx(i) + 1}" y="${Y0 + 18}" font-size="10" text-anchor="middle">${i + 1}</text>`;
document.getElementById('chart').innerHTML =
  `<clipPath id="plot"><rect x="${X0}" y="0" width="560" height="${Y0}"/></clipPath><g clip-path="url(#plot)">${bars}${lines}${dots}</g>` +
  `<path d="M${X0} ${TOP}V${Y0}H613" fill="none" stroke="#000"/>${axis}` +
  `<text x="332" y="436" font-size="12" text-anchor="middle">Document Segments (Mr. President, Mr. Speaker, Members of the Cong...)</text>` +
  `<text transform="translate(24 211) rotate(-90)" font-size="12" text-anchor="middle">Relative Frequencies</text>`;

const kwic = [
  ['action. It is up to','to refrain from pressing for'],
  ['promotion of greater harmony between','and management. Second, restriction of'],
  ['farmers in post-war agriculture.','AND MANAGEMENT The year just'],
  ['World War--was marred by','management strife. Despite this outbreak'],
  ['methods for reaching agreement between','and management and to reduce'],
  ['order to punish a few','leaders, pass vindictive laws which'],
  ['the rank and file of','. We must not, under the'],
  ['1946, that management shares with','the responsibility for failure to'],
  ['merely by laws directed against','unions. During the last decade'],
  ['we have established a national','policy in this country based'],
  ['efficient governmental machinery to aid','and management in resolving their']
];
document.getElementById('rows').innerHTML = kwic.map(([l, r]) =>
  `<tr><td><svg width="11" height="11"><use href="#plus"/></svg></td><td>Mr. Pre…</td><td class="text-end">${l}</td><td class="text-center">la…</td><td>${r}</td><td></td></tr>`).join('');
</script>
</body>
</html>
